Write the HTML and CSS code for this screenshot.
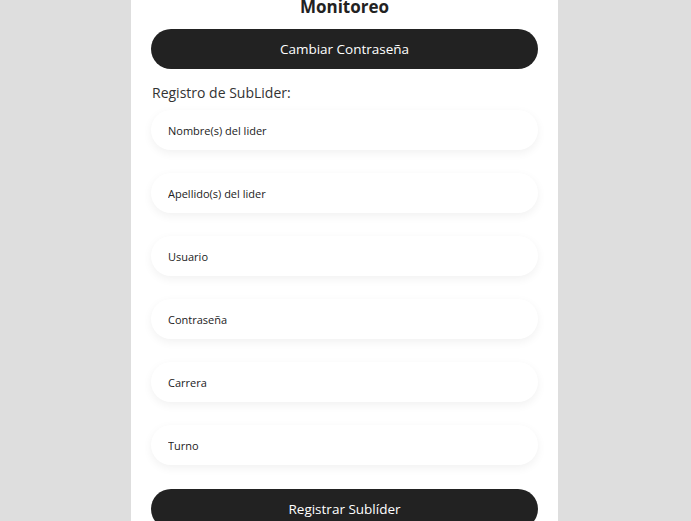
FILE: index.html
```html
<!DOCTYPE html>
<html lang="es">
<head>
<meta charset="utf-8">
<title>Monitoreo</title>
<link rel="stylesheet" href="styles.css">
</head>
<body>
<main class="card">
  <h2 class="title">Monitoreo</h2>
  <button class="btn" type="button">Cambiar Contraseña</button>
  <p class="label">Registro de SubLider:</p>
  <form class="form">
    <input class="field" type="text" placeholder="Nombre(s) del lider">
    <input class="field" type="text" placeholder="Apellido(s) del lider">
    <input class="field" type="text" placeholder="Usuario">
    <input class="field" type="password" placeholder="Contraseña">
    <input class="field" type="text" placeholder="Carrera">
    <input class="field" type="text" placeholder="Turno">
    <button class="btn btn-submit" type="button">Registrar Sublíder</button>
  </form>
</main>
</body>
</html>
```
FILE: styles.css
```css
html, body {
  margin: 0;
  padding: 0;
  height: 100%;
  overflow: hidden;
}
body {
  background: #dedede;
  font-family: "Open Sans", "DejaVu Sans", sans-serif;
  color: #222;
  display: flex;
  justify-content: center;
}
.card {
  width: 427px;
  box-sizing: border-box;
  background: #fff;
  padding: 0 20px;
  margin-right: 2px;
  min-height: 600px;
  display: flex;
  flex-direction: column;
}
.title {
  margin: 0;
  font-size: 17px;
  font-weight: 700;
  line-height: 14px;
  text-align: center;
  color: #222;
}
.btn {
  display: block;
  width: 100%;
  height: 40px;
  border: none;
  border-radius: 20px;
  background: #222;
  color: #fff;
  font-family: inherit;
  font-size: 13.5px;
  font-weight: 500;
  cursor: pointer;
}
.card > .btn {
  margin-top: 15px;
}
.label {
  margin: 15px 1px 8px;
  font-size: 14px;
  line-height: 18px;
  color: #333;
}
.form {
  display: flex;
  flex-direction: column;
  gap: 23px;
}
.field {
  display: block;
  width: 100%;
  box-sizing: border-box;
  height: 40px;
  border: none;
  border-radius: 20px;
  background: #fff;
  box-shadow: 0 3px 10px rgba(0, 0, 0, 0.06);
  padding: 0 17px;
  font-family: inherit;
  font-size: 11px;
  color: #222;
  outline: none;
}
.field::placeholder {
  color: #222;
  opacity: 1;
}
.btn-submit {
  margin-top: 1px;
}
```
